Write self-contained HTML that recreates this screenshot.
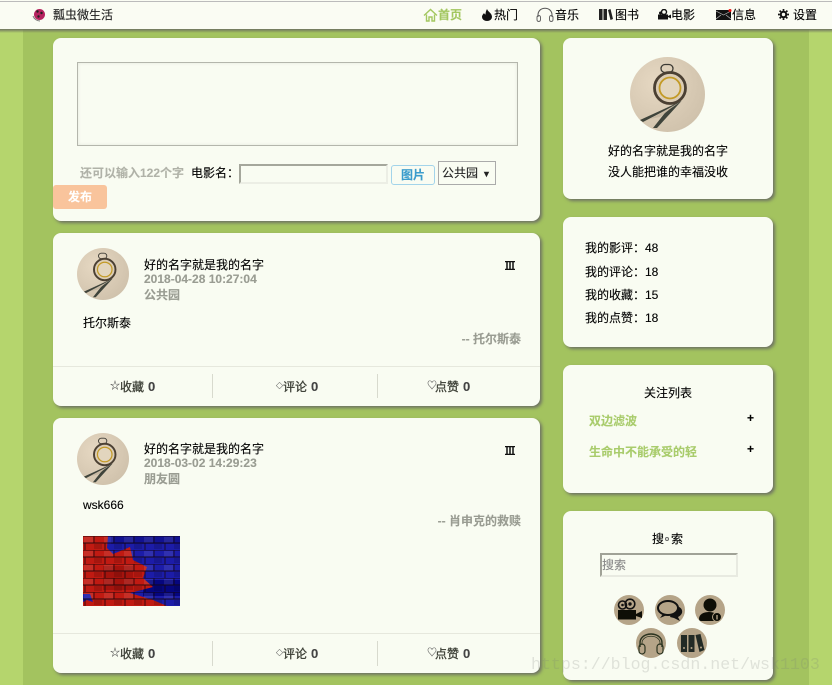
<!DOCTYPE html>
<html lang="zh">
<head>
<meta charset="utf-8">
<title>瓢虫微生活</title>
<style>
*{box-sizing:border-box}
html,body{margin:0;padding:0}
body{width:832px;height:685px;position:relative;overflow:hidden;background:#b5d56d;font:12px/16px "Liberation Sans","Noto Sans CJK SC",sans-serif;color:#000;-webkit-text-stroke:.12px currentColor}
#inner{position:absolute;left:23px;top:0;width:786px;height:685px;background:#a3c35f}
#nav{position:absolute;left:0;top:0;width:832px;height:29px;background:#fafcf3}
#navline{position:absolute;left:0;top:1px;width:832px;height:1px;background:#bbb}
#navsh{position:absolute;left:0;top:29px;width:832px;height:4px;background:linear-gradient(#6f7460,rgba(111,116,96,0))}
.card{position:absolute;background:#f9fcf2;border-radius:8px;box-shadow:2px 2px 3px #6e7263}
.t{position:absolute;white-space:nowrap;line-height:16px}
.abs{position:absolute;display:block}
.b{font-weight:bold}
.g{color:#999c92;font-weight:bold}
.f{color:#3c3f36;-webkit-text-stroke:.3px currentColor}
.n{color:#444;font-weight:bold;font-size:13px}
.s{color:#555;font-size:10px}
.line{position:absolute;background:#e6e8dd}
</style>
</head>
<body>
<svg width="0" height="0" style="position:absolute">
  <defs>
    <radialGradient id="av" cx="35%" cy="35%" r="80%"><stop offset="0" stop-color="#e6d8c2"/><stop offset="1" stop-color="#cdbfa9"/></radialGradient>
    <symbol id="avatar" viewBox="0 0 75 75">
      <circle cx="37.500" cy="37.500" r="37.500" fill="url(#av)"/>
      <rect x="31" y="7.500" width="12" height="8" rx="4" fill="none" stroke="#3c3a34" stroke-width="1.300"/>
      <circle cx="40" cy="31" r="15.500" fill="#dccdb5" stroke="#4b4033" stroke-width="2.800"/>
      <circle cx="40" cy="31" r="10.500" fill="#e2d5be" stroke="#c39a26" stroke-width="1.800"/>
      <path d="M51.500 44 L10 63 L13 65 L38 52 L23 71 L27 71 Z" fill="#3f443b"/>
      <path d="M50 45 L20 62 L30 60 L40 52Z" fill="#c6b8a2"/>
    </symbol>
    <symbol id="cam" viewBox="0 0 30 30"><circle cx="15" cy="15" r="15" fill="#b5a488"/><circle cx="8.500" cy="10" r="4" fill="none" stroke="#111" stroke-width="1.600"/><circle cx="8.500" cy="10" r="1.300" fill="#111"/><circle cx="16" cy="9" r="4.800" fill="none" stroke="#111" stroke-width="1.600"/><circle cx="16" cy="9" r="1.700" fill="#111"/><rect x="4" y="15" width="18" height="9.500" fill="#0e0e06"/><path d="M22 19l6-3v7l-6-2z" fill="#0e0e06"/></symbol>
    <symbol id="chat" viewBox="0 0 30 30"><circle cx="15" cy="15" r="15" fill="#b5a488"/><path d="M19 11c6 0 9 3 8 7-1 2-2 3-4 4l2 4-6-3-4-1z" fill="#111"/><ellipse cx="13" cy="13" rx="10" ry="7" fill="#b5a488" stroke="#111" stroke-width="2"/><path d="M8 19l-3 4 7-3z" fill="#111"/></symbol>
    <symbol id="user" viewBox="0 0 30 30"><circle cx="15" cy="15" r="15" fill="#b5a488"/><circle cx="15" cy="10" r="6.500" fill="#0e0e06"/><path d="M4 24c0-5 5-7 10-7s8 2 9 5l-2 4H6c-1 0-2-1-2-2z" fill="#0e0e06"/><circle cx="22" cy="22" r="4.500" fill="#0e0e06" stroke="#b5a488"/><rect x="21.300" y="20" width="1.400" height="4.500" fill="#b5a488"/></symbol>
    <symbol id="head" viewBox="0 0 30 30"><circle cx="15" cy="15" r="15" fill="#b5a488"/><path d="M4 19V15C4 3 26 3 26 15V19" fill="none" stroke="#2c3420" stroke-width="1.400"/><path d="M6 17V15C6 6 24 6 24 15V17" fill="none" stroke="#2c3420" stroke-width=".8"/><rect x="3" y="16" width="6" height="10" rx="3" fill="none" stroke="#2c3420" stroke-width="1.200"/><rect x="21" y="16" width="6" height="10" rx="3" fill="none" stroke="#2c3420" stroke-width="1.200"/></symbol>
    <symbol id="book" viewBox="0 0 30 30"><circle cx="15" cy="15" r="15" fill="#b5a488"/><rect x="4" y="7" width="6" height="17" fill="#222a25"/><rect x="11.500" y="7" width="6" height="17" fill="#222a25"/><path d="M18.500 7l5-1 4 16-5 2z" fill="#222a25"/><circle cx="7" cy="20" r="1" fill="#b5a488"/><circle cx="14.500" cy="20" r="1" fill="#b5a488"/><circle cx="24" cy="19.500" r="1" fill="#b5a488"/></symbol>
    <pattern id="brick" width="20" height="14" patternUnits="userSpaceOnUse"><rect x="1" y="1" width="9" height="5.500" fill="#fff" opacity=".09"/><rect x="11" y="8" width="8" height="5" fill="#000" opacity=".14"/><path d="M0 0H20M0 7H20M11 0V7M2 7V14" fill="none" stroke="#14060a" stroke-width=".9" opacity=".85"/></pattern>
  </defs>
</svg>

<div id="inner"></div>

<div id="navsh"></div>
<div id="nav"></div>
<div id="navline"></div>
<svg class="abs" style="left:32px;top:8px" width="14" height="14" viewBox="0 0 14 14"><circle cx="7.500" cy="6.500" r="5.500" fill="#b6235f"/><circle cx="5.500" cy="3.500" r="1.200" fill="#222"/><circle cx="9.500" cy="5" r="1.200" fill="#222"/><circle cx="6.500" cy="8.500" r="1.200" fill="#222"/><path d="M1 8c1 3 4 5 7 5" stroke="#777" fill="none"/></svg>
<span class="t" style="left:53px;top:7px;color:#222">瓢虫微生活</span>

<svg class="abs" style="left:423px;top:8px" width="15" height="14" viewBox="0 0 15 14"><path d="M1 7.500L7.500 1.500 14 7.500M3.500 6.500V13H6V9H9V13H11.500V6.500" fill="none" stroke="#a3c760" stroke-width="1.400"/></svg>
<span class="t b" style="left:438px;top:7px;color:#a3c760">首页</span>
<svg class="abs" style="left:482px;top:9px" width="10" height="12" viewBox="0 0 10 12"><path d="M5 0C6 3 10 4 10 8A5 4 0 0 1 0 8C0 6 1.500 5 2 4 2.500 5 3 5.500 3.500 5.500 3.500 3.500 4 2 5 0Z" fill="#111"/></svg>
<span class="t" style="left:494px;top:7px">热门</span>
<svg class="abs" style="left:536px;top:7px" width="18" height="15" viewBox="0 0 18 15"><path d="M2 10V8C2-1 16-1 16 8V10" fill="none" stroke="#555" stroke-width="1"/><rect x="1" y="8.500" width="3.500" height="6" rx="1.700" fill="none" stroke="#666"/><rect x="13.500" y="8.500" width="3.500" height="6" rx="1.700" fill="none" stroke="#666"/></svg>
<span class="t" style="left:555px;top:7px">音乐</span>
<svg class="abs" style="left:599px;top:9px" width="14" height="11" viewBox="0 0 14 11"><rect x="0" y="0" width="3.500" height="11" fill="#222"/><rect x="4.500" y="0" width="3.500" height="11" fill="#222"/><path d="M9 1l2.500-1 2.500 10-2.500 1z" fill="#222"/></svg>
<span class="t" style="left:615px;top:7px">图书</span>
<svg class="abs" style="left:658px;top:9px" width="13" height="11" viewBox="0 0 13 11"><circle cx="6" cy="3" r="2.500" fill="none" stroke="#111" stroke-width="1.400"/><circle cx="2.500" cy="4" r="1.500" fill="#111"/><rect x="0" y="5.500" width="10" height="5" fill="#111"/><path d="M10 7l3-1.500v4L10 8z" fill="#111"/></svg>
<span class="t" style="left:671px;top:7px">电影</span>
<svg class="abs" style="left:716px;top:9px" width="16" height="11" viewBox="0 0 16 11"><rect width="15" height="10" y="1" fill="#111"/><path d="M0 2l7.500 4L15 2M0 10l5-4M15 10l-5-4" stroke="#bbb" stroke-width=".7" fill="none"/><circle cx="14" cy="1.500" r="1.500" fill="#e11"/></svg>
<span class="t" style="left:732px;top:7px">信息</span>
<svg class="abs" style="left:778px;top:9px" width="11" height="11" viewBox="0 0 11 11"><circle cx="5.500" cy="5.500" r="2.700" fill="none" stroke="#111" stroke-width="2"/><path d="M5.500 0V11M0 5.500H11M1.600 1.600L9.400 9.400M9.400 1.600L1.600 9.400" stroke="#111" stroke-width="1.700" stroke-dasharray="1.900 7.200 1.900"/></svg>
<span class="t" style="left:793px;top:7px">设置</span>

<!-- Composer -->
<div class="card" style="left:53px;top:38px;width:487px;height:183px"></div>
<div class="abs" style="left:77px;top:62px;width:441px;height:84px;border:1px solid #b4b6ac;box-shadow:inset 0 0 3px #e4e6dc"></div>
<span class="t b" style="left:80px;top:165px;color:#b0b2a8">还可以输入122个字</span>
<span class="t" style="left:191px;top:165px">电影名：</span>
<div class="abs" style="left:239px;top:164px;width:149px;height:20px;border:2px solid;border-color:#a5a79c #eceee5 #eceee5 #a5a79c"></div>
<div class="abs" style="left:391px;top:165px;width:44px;height:20px;border:1px solid #a3d4ea;border-radius:3px;color:#3a9ccc;font-weight:bold;text-align:center;line-height:18px">图片</div>
<div class="abs" style="left:438px;top:161px;width:58px;height:24px;border:1px solid #aaa;line-height:22px;padding-left:3px;color:#222">公共园<span style="position:absolute;left:43px;top:1px;font-size:9px">▼</span></div>
<div class="abs" style="left:53px;top:185px;width:54px;height:24px;background:#f9c49c;border-radius:3px;color:#fff;font-weight:bold;text-align:center;line-height:24px">发布</div>

<!-- Post 1 -->
<div class="card" style="left:53px;top:233px;width:487px;height:173px"></div>
<svg class="abs" style="left:77px;top:248px" width="52" height="52"><use href="#avatar"/></svg>
<span class="t" style="left:144px;top:257px">好的名字就是我的名字</span>
<span class="t g" style="left:144px;top:271px">2018-04-28 10:27:04</span>
<span class="t g" style="left:144px;top:287px">公共园</span>
<svg class="abs" style="left:505px;top:261px" width="10" height="9" viewBox="0 0 10 9"><path d="M0 .500H10M0 8.500H10M2 1V8M5 1V8M8 1V8" stroke="#111" stroke-width="1.500" fill="none"/></svg>
<span class="t" style="left:83px;top:315px">托尔斯泰</span>
<span class="t g" style="right:311px;top:331px">-- 托尔斯泰</span>
<div class="line" style="left:53px;top:366px;width:487px;height:1px"></div>
<div class="line" style="left:212px;top:374px;width:1px;height:24px;background:#d8dace"></div>
<div class="line" style="left:377px;top:374px;width:1px;height:24px;background:#d8dace"></div>
<span class="t s" style="left:110px;top:379px">☆</span><span class="t f" style="left:120px;top:379px">收藏</span><span class="t n" style="left:148px;top:379px">0</span>
<span class="t s" style="left:276px;top:379px;font-size:7px">◇</span><span class="t f" style="left:283px;top:379px">评论</span><span class="t n" style="left:311px;top:379px">0</span>
<span class="t s" style="left:427px;top:379px">♡</span><span class="t f" style="left:435px;top:379px">点赞</span><span class="t n" style="left:463px;top:379px">0</span>

<!-- Post 2 -->
<div class="card" style="left:53px;top:418px;width:487px;height:255px"></div>
<svg class="abs" style="left:77px;top:433px" width="52" height="52"><use href="#avatar"/></svg>
<span class="t" style="left:144px;top:441px">好的名字就是我的名字</span>
<span class="t g" style="left:144px;top:455px">2018-03-02 14:29:23</span>
<span class="t g" style="left:144px;top:471px">朋友圆</span>
<svg class="abs" style="left:505px;top:446px" width="10" height="9" viewBox="0 0 10 9"><path d="M0 .500H10M0 8.500H10M2 1V8M5 1V8M8 1V8" stroke="#111" stroke-width="1.500" fill="none"/></svg>
<span class="t" style="left:83px;top:497px">wsk666</span>
<span class="t g" style="right:311px;top:513px">-- 肖申克的救赎</span>
<svg class="abs" style="left:83px;top:536px" width="97" height="70" viewBox="0 0 97 70">
  <rect width="97" height="70" fill="#1c1ca8"/>
  <rect x="28" y="0" width="69" height="8" fill="#121290"/>
  <rect x="60" y="44" width="37" height="16" fill="#06067e"/>
  <path d="M0 0H25L24 12 30 18 47 11 50 24 64 31 60 42 70 51 47 57 70 64 84 70H0Z" fill="#c01a12"/>
  <path d="M0 58H7L10 66 4 64 0 66Z" fill="#1c1ca8"/>
  <rect x="20" y="30" width="30" height="24" fill="#8e0f0a" opacity=".55"/>
  <rect width="97" height="70" fill="url(#brick)"/>
</svg>
<div class="line" style="left:53px;top:633px;width:487px;height:1px"></div>
<div class="line" style="left:212px;top:641px;width:1px;height:25px;background:#d8dace"></div>
<div class="line" style="left:377px;top:641px;width:1px;height:25px;background:#d8dace"></div>
<span class="t s" style="left:110px;top:646px">☆</span><span class="t f" style="left:120px;top:646px">收藏</span><span class="t n" style="left:148px;top:646px">0</span>
<span class="t s" style="left:276px;top:646px;font-size:7px">◇</span><span class="t f" style="left:283px;top:646px">评论</span><span class="t n" style="left:311px;top:646px">0</span>
<span class="t s" style="left:427px;top:646px">♡</span><span class="t f" style="left:435px;top:646px">点赞</span><span class="t n" style="left:463px;top:646px">0</span>

<!-- Profile -->
<div class="card" style="left:563px;top:38px;width:210px;height:161px"></div>
<svg class="abs" style="left:630px;top:57px" width="75" height="75"><use href="#avatar"/></svg>
<span class="t" style="left:563px;width:210px;text-align:center;top:143px">好的名字就是我的名字</span>
<span class="t" style="left:563px;width:210px;text-align:center;top:164px">没人能把谁的幸福没收</span>

<!-- Stats -->
<div class="card" style="left:563px;top:217px;width:210px;height:130px"></div>
<span class="t" style="left:585px;top:240px">我的影评：</span><span class="t" style="left:645px;top:240px">48</span>
<span class="t" style="left:585px;top:264px">我的评论：</span><span class="t" style="left:645px;top:264px">18</span>
<span class="t" style="left:585px;top:287px">我的收藏：</span><span class="t" style="left:645px;top:287px">15</span>
<span class="t" style="left:585px;top:310px">我的点赞：</span><span class="t" style="left:645px;top:310px">18</span>

<!-- Follow -->
<div class="card" style="left:563px;top:365px;width:210px;height:128px"></div>
<span class="t" style="left:563px;width:210px;text-align:center;top:385px">关注列表</span>
<span class="t b" style="left:589px;top:413px;color:#a9cc6c">双边滤波</span>
<span class="t b" style="left:747px;top:410px">+</span>
<span class="t b" style="left:589px;top:444px;color:#a9cc6c">生命中不能承受的轻</span>
<span class="t b" style="left:747px;top:441px">+</span>

<!-- Search -->
<div class="card" style="left:563px;top:511px;width:210px;height:169px"></div>
<span class="t" style="left:652px;top:531px">搜</span>
<span class="abs" style="left:665px;top:537px;width:4px;height:4px;border-radius:50%;border:1px solid #666"></span>
<span class="t" style="left:671px;top:531px">索</span>
<div class="abs" style="left:600px;top:553px;width:138px;height:24px;border:2px solid;border-color:#a0a297 #e8eae1 #e8eae1 #a0a297;color:#888;line-height:20px;padding-left:0">搜索</div>
<svg class="abs" style="left:614px;top:595px" width="30" height="30"><use href="#cam"/></svg>
<svg class="abs" style="left:655px;top:595px" width="30" height="30"><use href="#chat"/></svg>
<svg class="abs" style="left:695px;top:595px" width="30" height="30"><use href="#user"/></svg>
<svg class="abs" style="left:636px;top:628px" width="30" height="30"><use href="#head"/></svg>
<svg class="abs" style="left:677px;top:628px" width="30" height="30"><use href="#book"/></svg>

<span class="t" style="left:531px;top:656px;font:16.6px/18px 'Liberation Mono',monospace;color:rgba(120,125,120,.2);-webkit-text-stroke:0">https://blog.csdn.net/wsk1103</span>
</body>
</html>
